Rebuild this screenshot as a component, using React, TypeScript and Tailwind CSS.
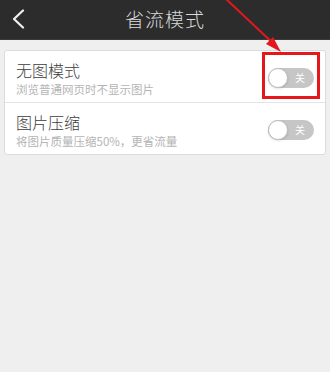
import React from "react";

const font = { fontFamily: '"Noto Sans CJK SC", "Noto Sans", sans-serif' };

function Toggle() {
  return (
    <div className="relative flex h-[20px] w-[46px] items-center rounded-full bg-[#c6c6c6]">
      <div className="h-[20px] w-[20px] rounded-full border border-[#bdbdbd] bg-white shadow-sm" />
      <span className="ml-[7px] text-[10px] leading-none text-white">关</span>
    </div>
  );
}

const rows = [
  { title: "无图模式", desc: "浏览普通网页时不显示图片" },
  { title: "图片压缩", desc: "将图片质量压缩50%，更省流量" },
];

export default function App() {
  return (
    <div className="relative h-[372px] w-[330px] overflow-hidden bg-[#efefef]" style={font}>
      {/* Header */}
      <div className="relative flex h-[40px] items-center justify-center bg-[#2c2c2c] border-b border-[#3a3a3a]">
        <svg className="absolute left-[10px] top-[9px]" width="16" height="20" viewBox="0 0 16 20">
          <polyline points="13,1.5 4,10 13,18.5" fill="none" stroke="#f0f0f0" strokeWidth="2.2" strokeLinecap="round" strokeLinejoin="round" />
        </svg>
        <h1 className="text-[19px] font-light text-[#dadada] tracking-[1px]">省流模式</h1>
      </div>

      {/* Settings card */}
      <div className="mx-[4px] mt-[10px] rounded-[3px] border border-[#dcdcdc] bg-white">
        {rows.map((row, i) => (
          <div
            key={row.title}
            className={`flex items-center justify-between pl-[11px] pr-[11px] pt-[9px] pb-[6px] ${i > 0 ? "border-t border-[#e3e3e3]" : ""}`}
          >
            <div>
              <div className="text-[16px] font-light leading-[20px] text-[#3c3c3c]">{row.title}</div>
              <div className="mt-[2px] text-[11.5px] leading-[14px] text-[#b4b4b4]">{row.desc}</div>
            </div>
            <Toggle />
          </div>
        ))}
      </div>

      {/* Annotation: red box */}
      <div className="absolute left-[262px] top-[52px] h-[47px] w-[58px] border-[3px] border-[#e3171c]" />

      {/* Annotation: arrow */}
      <svg className="absolute left-0 top-0" width="330" height="372" viewBox="0 0 330 372">
        <line x1="226" y1="-1" x2="276" y2="46" stroke="#e3171c" strokeWidth="2" />
        <polygon points="281,52 266,44 273,37" fill="#e3171c" />
      </svg>
    </div>
  );
}
